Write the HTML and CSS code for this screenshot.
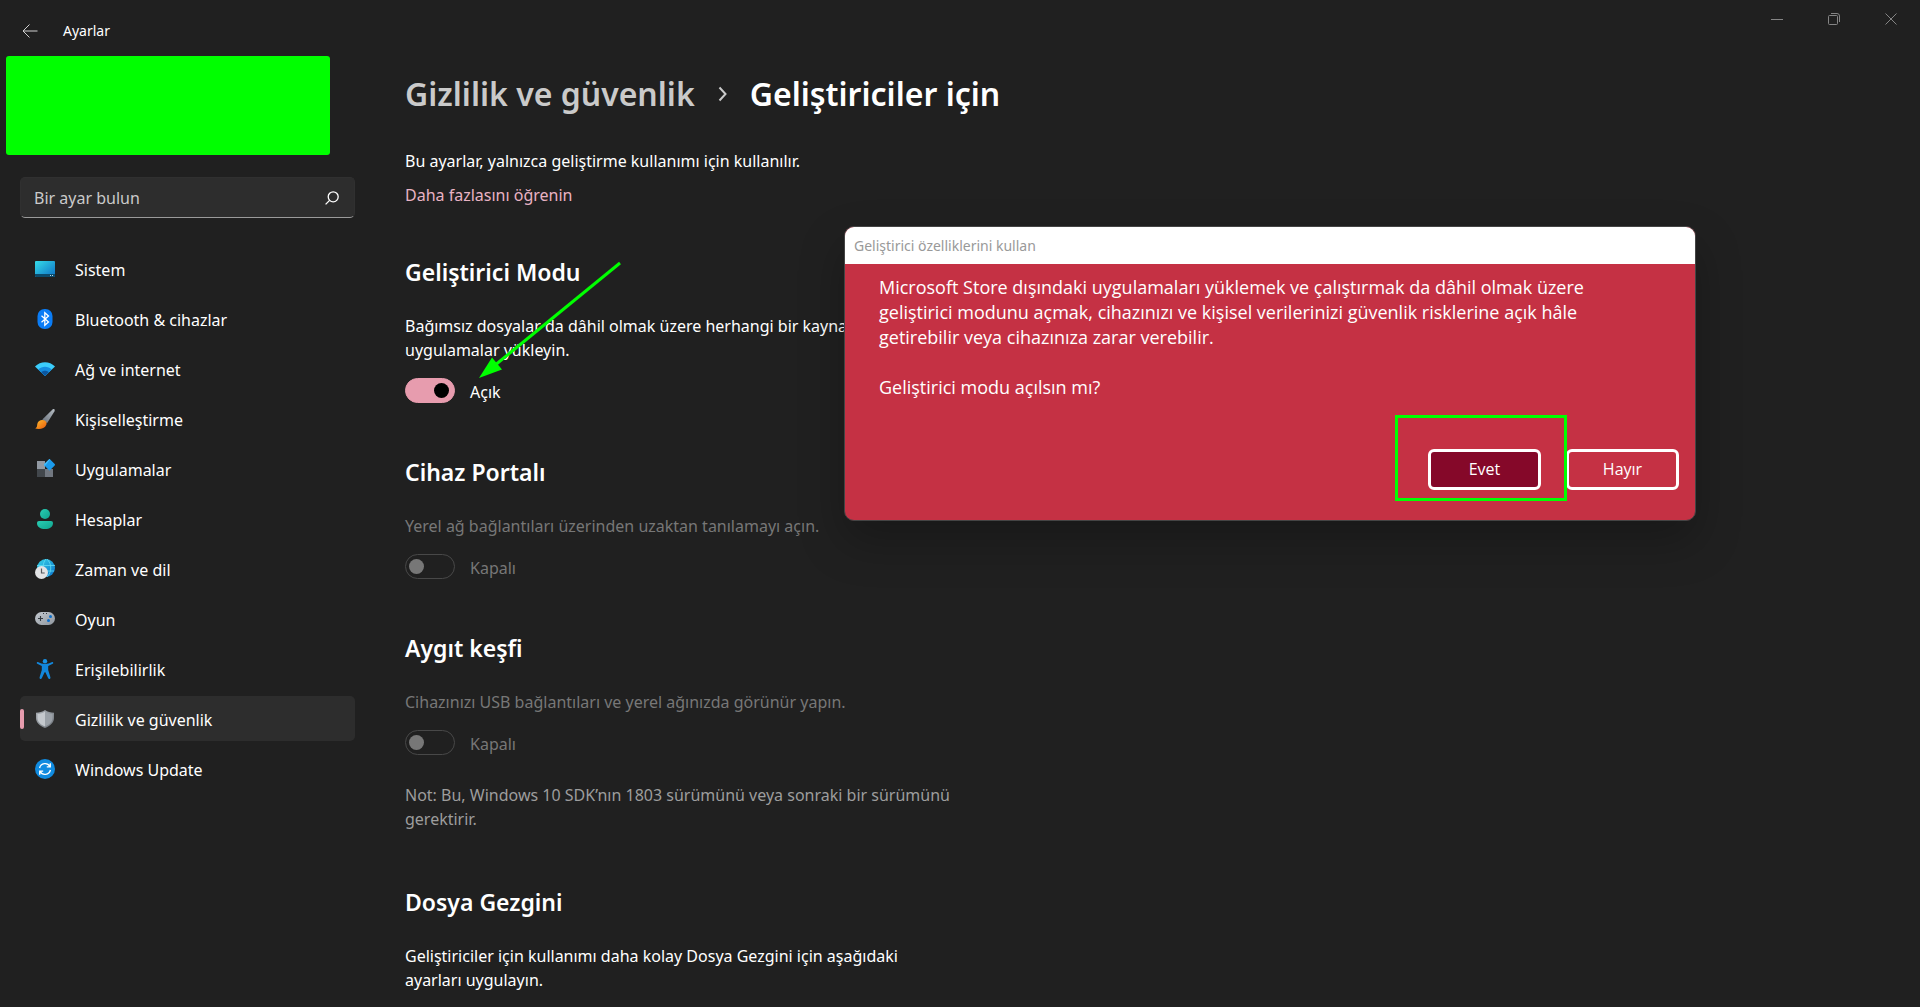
FILE: index.html
```html
<!DOCTYPE html>
<html lang="tr">
<head>
<meta charset="utf-8">
<title>Ayarlar</title>
<meta name="viewport" content="width=device-width, initial-scale=1">
<link rel="stylesheet" href="styles.css">
</head>
<body>
<div class="window">
  <div class="caption">
    <button class="caption-btn" type="button" aria-label="Simge durumuna küçült"><svg width="12" height="12" viewBox="0 0 12 12"><path d="M0 6.500h12"/></svg></button>
    <button class="caption-btn" type="button" aria-label="Önceki boyut"><svg width="12" height="12" viewBox="0 0 12 12"><rect x=".5" y="2.500" width="9" height="9" rx="1"/><path d="M3 .5h6a2.500 2.500 0 0 1 2.500 2.500v6"/></svg></button>
    <button class="caption-btn" type="button" aria-label="Kapat"><svg width="12" height="12" viewBox="0 0 12 12"><path d="M.5 .5l11 11M11.500 .5l-11 11"/></svg></button>
  </div>

  <aside class="sidebar">
    <header class="titlebar">
      <button class="back" type="button" aria-label="Geri"><svg width="16" height="14" viewBox="0 0 16 14"><path d="M15.500 7H1M7.500 .5L1 7l6.500 6.500"/></svg></button>
      <span class="app-name">Ayarlar</span>
    </header>
    <div class="account"></div>
    <form class="search" role="search">
      <input class="search-input" type="text" placeholder="Bir ayar bulun" aria-label="Bir ayar bulun">
      <button class="search-btn" type="button" aria-label="Ara"><svg width="14" height="14" viewBox="0 0 14 14"><circle cx="8.200" cy="5.800" r="5"/><path d="M4.600 9.400L.6 13.400"/></svg></button>
    </form>
    <nav class="nav">
      <a class="nav-item" href="#sistem">
        <svg class="icon" viewBox="0 0 20 20"><defs><linearGradient id="g-sys" x1="0" y1="0" x2="1" y2="1"><stop offset="0" stop-color="#35dbe8"/><stop offset="1" stop-color="#0d6fc4"/></linearGradient></defs><rect y="2" width="20" height="16" rx="1" fill="url(#g-sys)"/><path d="M0 15h20v2a1 1 0 0 1-1 1H1a1 1 0 0 1-1-1z" fill="#0b4a6b"/><path d="M15 16h1v1h-1zM17 16h1v1h-1z" fill="#b9dbe8"/></svg>
        <span>Sistem</span></a>
      <a class="nav-item" href="#bluetooth">
        <svg class="icon" viewBox="0 0 20 20"><rect x="2.500" width="15" height="20" rx="7" fill="#0a7cf5"/><path d="M6.500 6.800l7 6.200-3.700 3.300V3.700L13.500 7l-7 6.200" fill="none" stroke="#fff" stroke-width="1.300"/></svg>
        <span>Bluetooth &amp; cihazlar</span></a>
      <a class="nav-item" href="#ag">
        <svg class="icon" viewBox="0 0 20 20"><path d="M10 17L0 7.500C5.500 1.700 14.500 1.700 20 7.500z" fill="#3bcdfb"/><path d="M10 17L3.300 10.600c3.700-3.700 9.700-3.700 13.400 0z" fill="#158de0"/><path d="M10 17l-3.800-3.700c2.100-2 5.500-2 7.600 0z" fill="#0b569f"/></svg>
        <span>Ağ ve internet</span></a>
      <a class="nav-item" href="#kisisellestirme">
        <svg class="icon" viewBox="0 0 20 20"><defs><linearGradient id="g-br" x1="1" y1="0" x2="0" y2="1"><stop offset="0" stop-color="#b5bcc3"/><stop offset="1" stop-color="#68707a"/></linearGradient><linearGradient id="g-or" x1="0" y1="0" x2="1" y2="1"><stop offset="0" stop-color="#ffc02e"/><stop offset="1" stop-color="#e8590c"/></linearGradient></defs><path d="M17.500 .4c1.600-.9 2.700.3 2 1.800L12 14.200 7.300 10.600z" fill="url(#g-br)"/><path d="M7 11c3.200-.2 5.300 2.200 4.300 4.700-1.500 4-6.800 5-11 3.800C3 18 1.600 16 2.800 13.600 3.700 12 5.200 11.200 7 11z" fill="url(#g-or)"/></svg>
        <span>Kişiselleştirme</span></a>
      <a class="nav-item" href="#uygulamalar">
        <svg class="icon" viewBox="0 0 20 20"><path d="M2 2h8v8H2z" fill="#9299a2"/><path d="M2 10h8v8H2z" fill="#42474c"/><path d="M10 10h8v8h-8z" fill="#717780"/><path d="M13.800 .5q.7-.7 1.400 0l4.500 4.600q.6.700 0 1.300l-4.500 4.700q-.7.600-1.400 0L9.300 6.400q-.6-.6 0-1.300z" fill="#1b9bec"/><path d="M14.500 0l.7.5-5.200 6.600-.7-.7q-.6-.6 0-1.300z" fill="#40bbfa"/></svg>
        <span>Uygulamalar</span></a>
      <a class="nav-item" href="#hesaplar">
        <svg class="icon" viewBox="0 0 20 20"><defs><linearGradient id="g-acc" x1="0" y1="0" x2="1" y2="1"><stop offset="0" stop-color="#29cdb3"/><stop offset="1" stop-color="#0fa38d"/></linearGradient></defs><circle cx="10" cy="5" r="5" fill="url(#g-acc)"/><path d="M4 12h12q2 0 2 2c0 4-3.500 6-8 6s-8-2-8-6q0-2 2-2z" fill="url(#g-acc)"/></svg>
        <span>Hesaplar</span></a>
      <a class="nav-item" href="#zaman">
        <svg class="icon" viewBox="0 0 20 20"><defs><linearGradient id="g-gl" x1="0" y1="0" x2="1" y2="1"><stop offset="0" stop-color="#35d3e8"/><stop offset="1" stop-color="#0b72cc"/></linearGradient></defs><circle cx="11" cy="9" r="9" fill="url(#g-gl)"/><path d="M2 6.500h18M8 12h11M11 0c-4 4-4 14 0 18M12 0c5 5 5 13 0 18" fill="none" stroke="#63dcf2" stroke-width=".8"/><circle cx="6.500" cy="13.500" r="6.500" fill="#e2e3e5"/><path d="M6.500 9.500v4.500h3.200" fill="none" stroke="#55595e" stroke-width="1.200"/></svg>
        <span>Zaman ve dil</span></a>
      <a class="nav-item" href="#oyun">
        <svg class="icon" viewBox="0 0 20 20"><defs><linearGradient id="g-gm" x1="0" y1="0" x2="1" y2="1"><stop offset="0" stop-color="#c5cad0"/><stop offset="1" stop-color="#8e959d"/></linearGradient></defs><rect y="3" width="20" height="13" rx="6.500" fill="url(#g-gm)"/><path d="M5.500 7v5M3 9.500h5" stroke="#353a40" stroke-width="1.100"/><path d="M8 4h1v1H8zM11 4h1v1h-1z" fill="#353a40"/><circle cx="15.500" cy="7.500" r="1.500" fill="#0c6fcb"/><circle cx="13.500" cy="11.500" r="1.500" fill="#0c6fcb"/></svg>
        <span>Oyun</span></a>
      <a class="nav-item" href="#erisilebilirlik">
        <svg class="icon" viewBox="0 0 20 20"><circle cx="10" cy="2.200" r="2.200" fill="#1893e6"/><path d="M2.800 3.100c-1-.4-1.500 1.200-.5 1.700L6.800 7v4L4.600 18.200c-.4 1.700 1.600 2.400 2.300.8L9.600 13.300h.8l2.700 5.700c.7 1.600 2.700.9 2.300-.8L13.200 11V7l4.500-2.200c1-.5.500-2.100-.5-1.700C12.500 5.600 7.500 5.600 2.800 3.100z" fill="#1287dc"/></svg>
        <span>Erişilebilirlik</span></a>
      <a class="nav-item nav-item-active" href="#gizlilik" aria-current="page">
        <svg class="icon" viewBox="0 0 20 20"><defs><linearGradient id="g-sh" x1="0" y1="0" x2="1" y2="1"><stop offset="0" stop-color="#a8adb3"/><stop offset="1" stop-color="#70767d"/></linearGradient></defs><path d="M10 1c2.500 1.800 5.500 2.600 9 2.800V9c0 4.600-4 8.300-9 10-5-1.700-9-5.400-9-10V3.800C4.500 3.600 7.500 2.800 10 1z" fill="url(#g-sh)"/><path d="M10 2.600v14.800c-4.200-1.600-7.500-4.600-7.500-8.500V5.100C5.300 4.900 8 4 10 2.600z" fill="#c4c8cd"/><path d="M10 2.600v14.800c4.200-1.600 7.500-4.600 7.500-8.500V5.100C14.700 4.900 12 4 10 2.600z" fill="#9ba1a8"/></svg>
        <span>Gizlilik ve güvenlik</span></a>
      <a class="nav-item" href="#update">
        <svg class="icon" viewBox="0 0 20 20"><circle cx="10" cy="10" r="10" fill="#108be0"/><path d="M4.600 9A5.600 5.600 0 0 1 15 7.600M15.400 11A5.600 5.600 0 0 1 5 12.400M15.300 4.300v3.500h-3.500M4.700 15.700v-3.500h3.500" fill="none" stroke="#fff" stroke-width="1.300"/></svg>
        <span>Windows Update</span></a>
    </nav>
  </aside>

  <main class="content">
    <h1 class="crumbs">
      <a class="crumb-parent" href="#gizlilik">Gizlilik ve güvenlik</a>
      <svg class="chevron" width="9" height="16" viewBox="0 0 9 16"><path d="M1.500 1.500L7.500 8l-6 6.500"/></svg>
      <span>Geliştiriciler için</span>
    </h1>
    <p class="intro">Bu ayarlar, yalnızca geliştirme kullanımı için kullanılır.</p>
    <a class="learn" href="#bilgi">Daha fazlasını öğrenin</a>

    <section class="group">
      <h2>Geliştirici Modu</h2>
      <p>Bağımsız dosyalar da dâhil olmak üzere herhangi bir kaynaktan<br>uygulamalar yükleyin.</p>
      <label class="toggle"><input type="checkbox" role="switch" checked><span>Açık</span></label>
    </section>
    <section class="group group-disabled">
      <h2>Cihaz Portalı</h2>
      <p>Yerel ağ bağlantıları üzerinden uzaktan tanılamayı açın.</p>
      <label class="toggle"><input type="checkbox" role="switch" disabled><span>Kapalı</span></label>
    </section>
    <section class="group group-disabled">
      <h2>Aygıt keşfi</h2>
      <p>Cihazınızı USB bağlantıları ve yerel ağınızda görünür yapın.</p>
      <label class="toggle"><input type="checkbox" role="switch" disabled><span>Kapalı</span></label>
      <p class="note">Not: Bu, Windows 10 SDK’nın 1803 sürümünü veya sonraki bir sürümünü<br>gerektirir.</p>
    </section>
    <section class="group">
      <h2>Dosya Gezgini</h2>
      <p>Geliştiriciler için kullanımı daha kolay Dosya Gezgini için aşağıdaki<br>ayarları uygulayın.</p>
    </section>
  </main>

  <div class="dialog" role="dialog" aria-labelledby="dialog-title">
    <div class="dialog-title" id="dialog-title">Geliştirici özelliklerini kullan</div>
    <div class="dialog-body">
      <p>Microsoft Store dışındaki uygulamaları yüklemek ve çalıştırmak da dâhil olmak üzere<br>geliştirici modunu açmak, cihazınızı ve kişisel verilerinizi güvenlik risklerine açık hâle<br>getirebilir veya cihazınıza zarar verebilir.</p>
      <p>Geliştirici modu açılsın mı?</p>
      <div class="dialog-actions">
        <button class="dialog-btn dialog-btn-primary" type="button">Evet</button>
        <button class="dialog-btn" type="button">Hayır</button>
      </div>
    </div>
    <div class="mark-box"></div>
  </div>
  <svg class="mark-arrow" width="144" height="120" viewBox="0 0 144 120"><path d="M142 2L16 105" stroke="#0f0" stroke-width="3"/><path d="M1 117L14 96.500l10 12z" fill="#0f0"/></svg>
</div>
</body>
</html>
```

FILE: styles.css
```css
* { box-sizing: border-box; }

body {
  margin: 0;
  background: #202020;
  color: #fff;
  font-family: "Noto Sans", "Open Sans", sans-serif;
  font-size: 16px;
  line-height: 24px;
}

h1, h2, p { margin: 0; }
a { color: inherit; text-decoration: none; }
button, input { font: inherit; color: inherit; }
button { background: none; border: 0; padding: 0; }
svg { display: block; }

.window {
  position: relative;
  display: grid;
  grid-template-columns: 375px 1fr;
  min-height: 100vh;
  overflow: hidden;
}

/* Window buttons */
.caption {
  position: absolute;
  top: 0;
  right: 1px;
  display: flex;
}
.caption-btn {
  width: 57px;
  height: 38px;
  display: grid;
  place-items: center;
}
.caption-btn svg { fill: none; stroke: #858585; }

/* Sidebar */
.sidebar { padding: 0 20px; }
.titlebar {
  display: flex;
  align-items: center;
  gap: 25px;
  height: 56px;
  padding-top: 6px;
}
.back { width: 18px; display: grid; justify-items: end; }
.back svg { fill: none; stroke: #d0d0d0; }
.app-name { font-size: 14px; }
.account {
  width: 324px;
  height: 99px;
  margin-left: -14px;
  border-radius: 3px;
  background: #0f0;
}
.search {
  display: flex;
  align-items: center;
  height: 41px;
  margin-top: 22px;
  padding: 0 15px 0 13px;
  border: 1px solid #303030;
  border-bottom-color: #9a9a9a;
  border-radius: 5px;
  background: #2d2d2d;
}
.search-input {
  flex: 1;
  min-width: 0;
  padding: 0;
  border: 0;
  outline: 0;
  background: none;
}
.search-input::placeholder { color: #cacaca; opacity: 1; }
.search-btn svg { fill: none; stroke: #fff; stroke-width: 1.300; }

.nav {
  display: grid;
  gap: 5px;
  margin-top: 28px;
}
.nav-item {
  position: relative;
  display: flex;
  align-items: center;
  gap: 20px;
  height: 45px;
  padding-left: 15px;
  border-radius: 5px;
}
.nav-item span { padding-top: 2px; }
.nav-item-active { background: #2d2d2d; }
.nav-item-active::before {
  content: "";
  position: absolute;
  left: 0;
  top: 13px;
  width: 4px;
  height: 20px;
  border-radius: 2px;
  background: #e79cae;
}
.icon { width: 20px; height: 20px; }

/* Settings page */
.content {
  max-width: 645px;
  padding: 70px 0 16px 30px;
}
.crumbs {
  display: flex;
  align-items: center;
  gap: 23px;
  font-size: 32px;
  font-weight: 600;
  line-height: 48px;
  white-space: nowrap;
}
.crumb-parent { color: #cacaca; }
.chevron { flex: none; fill: none; stroke: #cacaca; stroke-width: 2; }
.intro { margin-top: 31px; }
.learn {
  display: block;
  margin-top: 10px;
  color: #e9b3c4;
}
.group { margin-top: 53px; }
.learn + .group { margin-top: 49px; }
.note + .group, .group:last-child { margin-top: 55px; }
.group h2 {
  margin-bottom: 26px;
  font-size: 23px;
  font-weight: 600;
  line-height: 32px;
}
.group-disabled p, .group-disabled .toggle { color: #777; }
.toggle {
  display: flex;
  align-items: center;
  gap: 15px;
  margin-top: 16px;
  height: 25px;
}
.toggle input {
  appearance: none;
  display: flex;
  align-items: center;
  width: 50px;
  height: 25px;
  margin: 0;
  padding: 0 3px;
  border: 1px solid #484848;
  border-radius: 13px;
}
.toggle span { padding-top: 2px; }
.toggle input::before {
  content: "";
  width: 15px;
  height: 15px;
  border-radius: 50%;
  background: #777;
}
.toggle input:checked {
  justify-content: flex-end;
  padding: 0 5px;
  border-color: #e79cae;
  background: #e79cae;
}
.toggle input:checked::before { background: #000; }
.group .note { margin-top: 28px; color: #9d9d9d; }

/* Confirmation dialog */
.dialog {
  position: absolute;
  left: 844px;
  top: 226px;
  width: 852px;
  border: 1px solid #444;
  border-radius: 10px;
  background: #c53144;
  box-shadow: 0 20px 45px rgba(0, 0, 0, .25);
}
.dialog-title {
  height: 37px;
  padding-left: 9px;
  border-radius: 9px 9px 0 0;
  background: #fff;
  color: #999;
  font-size: 14px;
  line-height: 37px;
}
.dialog-body {
  display: grid;
  gap: 25px;
  padding: 11px 16px 30px 34px;
  font-family: "Open Sans", "Noto Sans", sans-serif;
  font-size: 18px;
  line-height: 25px;
}
.dialog-actions {
  display: flex;
  justify-content: flex-end;
  gap: 25px;
  margin-top: 24px;
}
.dialog-btn {
  width: 113px;
  height: 41px;
  border: 3px solid #fff;
  border-radius: 6px;
  font-size: 16px;
}
.dialog-btn-primary { background: #850829; }

/* Highlights */
.mark-box {
  position: absolute;
  right: 128px;
  bottom: 19px;
  width: 172px;
  height: 86px;
  border: 3px solid #0f0;
}
.mark-arrow {
  position: absolute;
  left: 478px;
  top: 261px;
}
```
